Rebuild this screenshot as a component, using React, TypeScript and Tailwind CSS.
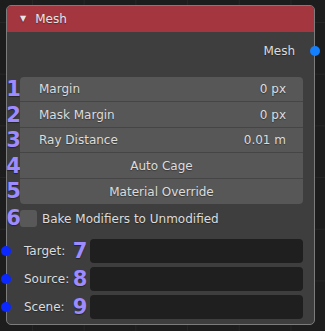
import React from "react";

const font = { fontFamily: '"DejaVu Sans", Verdana, sans-serif' };

const numCls =
  "flex justify-center items-center text-[21px] leading-none font-bold text-[#9d8bff] [text-shadow:0_1px_1px_rgba(0,0,0,0.4)]";

function InputRow({ n, label }: { n: string; label: string }) {
  return (
    <div className="relative flex items-center h-[24px]">
      <div className="absolute left-[-6px] top-1/2 -translate-y-1/2 w-[10px] h-[10px] rounded-full bg-[#0a28ff]" />
      <div className="pl-[17px] w-[63px]">{label}</div>
      <div className={`w-[20px] ${numCls}`}>{n}</div>
      <div className="w-[213px] h-[24px] rounded-[4px] bg-[#1f1f1f]" />
    </div>
  );
}

const rows = [
  { n: "1", h: "h-[25px]" },
  { n: "2", h: "h-[26px]" },
  { n: "3", h: "h-[25px]" },
  { n: "4", h: "h-[26px]" },
  { n: "5", h: "h-[25px]" },
];

export default function App() {
  return (
    <div
      className="w-[325px] h-[331px] overflow-hidden bg-[#1d1d1d] pt-[5px] pl-[6px] text-[12px] text-[#dcdcdc] bg-[linear-gradient(to_right,#262626_1px,transparent_1px),linear-gradient(to_bottom,#262626_1px,transparent_1px)] bg-[size:51.7px_51.7px] bg-[position:32px_22px]"
      style={font}
    >
      <div className="relative w-[309px] h-[320px] rounded-[5px] border border-[#7c7c7c] bg-[#3e3e3e] [text-shadow:0_1px_1px_rgba(0,0,0,0.35)]">
        <div className="h-[26px] rounded-t-[4px] bg-[#a3363f] flex items-center pl-[13px] text-[#e6e6e6]">
          <span className="text-[8px] leading-none mr-[9px]">▼</span>
          <span>Mesh</span>
        </div>
        <div className="relative mt-[9px] h-[20px] flex items-center justify-end pr-[19px]">
          <span>Mesh</span>
          <div className="absolute right-[-6px] top-1/2 -translate-y-1/2 w-[10px] h-[10px] rounded-full bg-[#1580ff]" />
        </div>
        <div className="mt-[16px] flex">
          <div className="w-[13px] flex flex-col">
            {rows.map((r) => (
              <div key={r.n} className={`${r.h} ${numCls}`}>
                {r.n}
              </div>
            ))}
          </div>
          <div className="w-[283px] flex flex-col rounded-[4px] overflow-hidden bg-[#575757]">
            <div className="h-[25px] flex items-center justify-between pl-[19px] pr-[17px] border-b border-[#454545]">
              <span>Margin</span>
              <span>0 px</span>
            </div>
            <div className="h-[26px] flex items-center justify-between pl-[19px] pr-[17px] border-b border-[#454545]">
              <span>Mask Margin</span>
              <span>0 px</span>
            </div>
            <div className="h-[25px] flex items-center justify-between pl-[19px] pr-[17px] border-b border-[#454545]">
              <span>Ray Distance</span>
              <span>0.01 m</span>
            </div>
            <div className="h-[26px] flex items-center justify-center border-b border-[#454545]">
              <span>Auto Cage</span>
            </div>
            <div className="h-[25px] flex items-center justify-center">
              <span>Material Override</span>
            </div>
          </div>
        </div>
        <div className="mt-[6px] flex items-center h-[17px]">
          <div className={`w-[13px] ${numCls}`}>6</div>
          <div className="w-[17px] h-[17px] rounded-[3px] bg-[#585858]" />
          <span className="ml-[5px]">Bake Modifiers to Unmodified</span>
        </div>
        <div className="mt-[12px] flex flex-col gap-[4px]">
          <InputRow n="7" label="Target:" />
          <InputRow n="8" label="Source:" />
          <InputRow n="9" label="Scene:" />
        </div>
      </div>
    </div>
  );
}
